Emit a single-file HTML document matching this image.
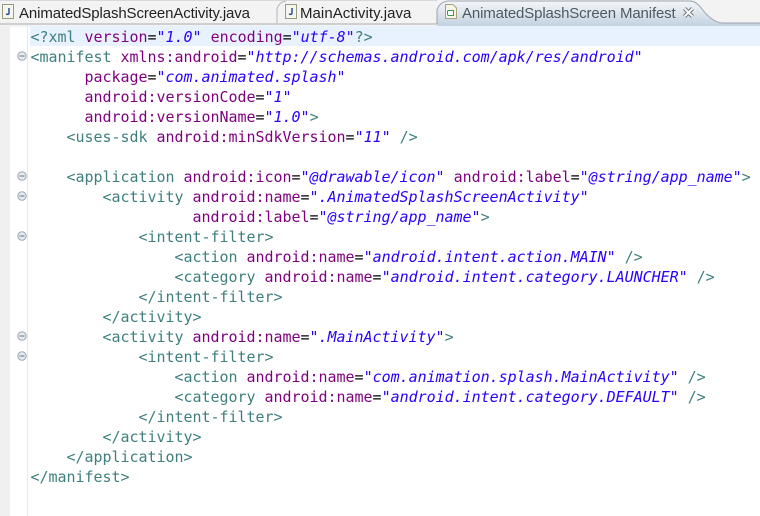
<!DOCTYPE html>
<html><head><meta charset="utf-8"><style>
html,body{margin:0;padding:0;width:760px;height:516px;overflow:hidden;background:#fff}
.abs{position:absolute}
#ruler{left:0;top:26px;width:10px;height:490px;background:#f0f0f0}
#ruler2{left:27px;top:26px;width:1px;height:490px;background:#e8e8e8}
#hl{left:30px;top:26px;width:730px;height:20px;background:#e8f2fe}
.l{position:absolute;left:30.5px;white-space:pre;font:15px/20px "DejaVu Sans Mono","Liberation Mono",monospace;letter-spacing:-.03px;color:#3f7f7f;height:20px}
.a{color:#7f007f}.v{color:#2a00ff;font-style:italic}.e{color:#000}
.tab{position:absolute;top:4px;font:15px/20px "Liberation Sans",sans-serif;color:#222;white-space:pre}
</style></head><body>
<svg class="abs" style="left:0;top:0" width="760" height="27">
<defs><linearGradient id="g" x1="0" y1="0" x2="0" y2="1"><stop offset="0" stop-color="#f4f6f8"/><stop offset="1" stop-color="#c3d2e1"/></linearGradient></defs>
<rect width="760" height="27" fill="#f3f3f3"/>
<rect y="23" width="760" height="2" fill="#cfcfcf"/>
<path d="M437 26V10Q440 1 450 1H690Q696 1 702 9Q712 22 722 23H760V26Z" fill="url(#g)"/>
<path d="M437 24V10Q440 1 450 1H690Q696 1 702 9Q712 22 722 23H760" fill="none" stroke="#9aa4ad"/>
<path d="M0 .5H437" stroke="#d8d8d8"/>
<path d="M277 23V9Q279 2 286 1" fill="none" stroke="#b5b5b5"/>
<rect x="2.5" y="4.5" width="11" height="14" fill="#f6f6ee" stroke="#9a9a80"/>
<path d="M9 8V13Q9 15 6 14" fill="none" stroke="#2a4f9a" stroke-width="1.5"/>
<rect x="285.5" y="4.5" width="11" height="14" fill="#f6f6ee" stroke="#9a9a80"/>
<path d="M292 8V13Q292 15 289 14" fill="none" stroke="#2a4f9a" stroke-width="1.5"/>
<path d="M445.5 4.5H453L456.5 8V18.5H445.5Z" fill="#f8f6ea" stroke="#a8a078"/>
<path d="M448 10.5H453.500V15.5H449Q447.5 15.5 447.5 14V11.5Z" fill="#fff" stroke="#3c9a4c"/>
<path d="M684.5 8.500L692.500 16.500M692.500 8.500L684.500 16.500" stroke="#6a6a6a" stroke-width="4"/>
<path d="M684.500 8.500L692.500 16.500M692.500 8.500L684.500 16.500" stroke="#f4f6f8" stroke-width="2.200"/>
</svg>
<div class="tab" style="left:19px;letter-spacing:-.12px">AnimatedSplashScreenActivity.java</div>
<div class="tab" style="left:300px;letter-spacing:.05px">MainActivity.java</div>
<div class="tab" style="left:462px;color:#4d5a64;letter-spacing:-.14px">AnimatedSplashScreen Manifest</div>
<div class="abs" id="ruler"></div><div class="abs" id="ruler2"></div><div class="abs" id="hl"></div>
<svg class="abs" style="left:0;top:0" width="30" height="516">
<defs><g id="f"><circle cx="0" cy="0" r="4.200" fill="#e6ebf2" stroke="#9aa6b4"/><path d="M-2.500 0H2.500" stroke="#66707c"/></g></defs>
<use href="#f" x="22" y="56"/><use href="#f" x="22" y="176"/><use href="#f" x="22" y="196"/><use href="#f" x="22" y="236"/><use href="#f" x="22" y="336"/><use href="#f" x="22" y="356"/>
</svg>
<div class="l" style="top:27px">&lt;?xml <span class="a">version</span><span class="e">=</span><span class="v">"1.0"</span> <span class="a">encoding</span><span class="e">=</span><span class="v">"utf-8"</span>?&gt;</div>
<div class="l" style="top:47px">&lt;manifest <span class="a">xmlns:android</span><span class="e">=</span><span class="v">"http://schemas.android.com/apk/res/android"</span></div>
<div class="l" style="top:67px">      <span class="a">package</span><span class="e">=</span><span class="v">"com.animated.splash"</span></div>
<div class="l" style="top:87px">      <span class="a">android:versionCode</span><span class="e">=</span><span class="v">"1"</span></div>
<div class="l" style="top:107px">      <span class="a">android:versionName</span><span class="e">=</span><span class="v">"1.0"</span>&gt;</div>
<div class="l" style="top:127px">    &lt;uses-sdk <span class="a">android:minSdkVersion</span><span class="e">=</span><span class="v">"11"</span> /&gt;</div>
<div class="l" style="top:167px">    &lt;application <span class="a">android:icon</span><span class="e">=</span><span class="v">"@drawable/icon"</span> <span class="a">android:label</span><span class="e">=</span><span class="v">"@string/app_name"</span>&gt;</div>
<div class="l" style="top:187px">        &lt;activity <span class="a">android:name</span><span class="e">=</span><span class="v">".AnimatedSplashScreenActivity"</span></div>
<div class="l" style="top:207px">                  <span class="a">android:label</span><span class="e">=</span><span class="v">"@string/app_name"</span>&gt;</div>
<div class="l" style="top:227px">            &lt;intent-filter&gt;</div>
<div class="l" style="top:247px">                &lt;action <span class="a">android:name</span><span class="e">=</span><span class="v">"android.intent.action.MAIN"</span> /&gt;</div>
<div class="l" style="top:267px">                &lt;category <span class="a">android:name</span><span class="e">=</span><span class="v">"android.intent.category.LAUNCHER"</span> /&gt;</div>
<div class="l" style="top:287px">            &lt;/intent-filter&gt;</div>
<div class="l" style="top:307px">        &lt;/activity&gt;</div>
<div class="l" style="top:327px">        &lt;activity <span class="a">android:name</span><span class="e">=</span><span class="v">".MainActivity"</span>&gt;</div>
<div class="l" style="top:347px">            &lt;intent-filter&gt;</div>
<div class="l" style="top:367px">                &lt;action <span class="a">android:name</span><span class="e">=</span><span class="v">"com.animation.splash.MainActivity"</span> /&gt;</div>
<div class="l" style="top:387px">                &lt;category <span class="a">android:name</span><span class="e">=</span><span class="v">"android.intent.category.DEFAULT"</span> /&gt;</div>
<div class="l" style="top:407px">            &lt;/intent-filter&gt;</div>
<div class="l" style="top:427px">        &lt;/activity&gt;</div>
<div class="l" style="top:447px">    &lt;/application&gt;</div>
<div class="l" style="top:467px">&lt;/manifest&gt;</div>
</body></html>
